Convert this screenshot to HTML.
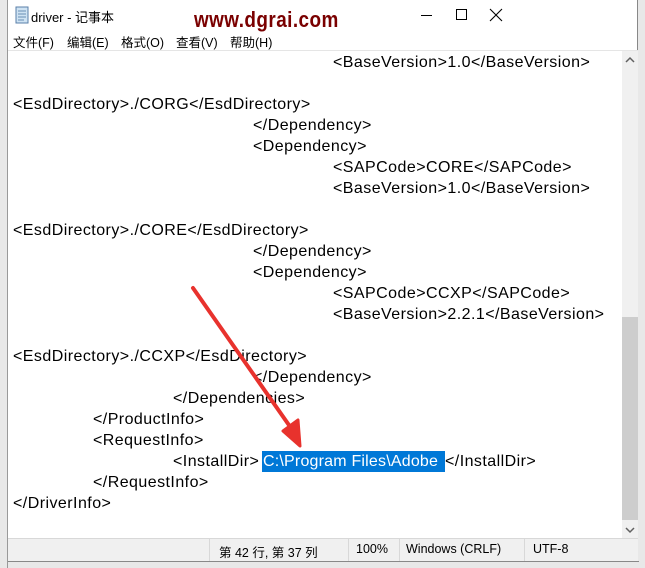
<!DOCTYPE html>
<html><head><meta charset="utf-8"><style>
*{margin:0;padding:0;box-sizing:border-box}
body{width:645px;height:568px;background:#e8e8e8;position:relative;overflow:hidden;font-family:"Liberation Sans","Noto Sans CJK SC",sans-serif}
#win{position:absolute;left:7px;top:0;width:631px;height:568px;background:#fff;border-left:1px solid #999;border-right:1px solid #888}
.t{position:absolute;font-size:16px;color:#000;white-space:pre;line-height:21px;letter-spacing:0.45px}
.m{position:absolute;top:32px;font-size:12.5px;color:#000}
</style></head><body>
<div id="win">
  <svg style="position:absolute;left:6px;top:6px" width="16" height="18"><rect x="2" y="1" width="12" height="16" fill="#cfe3f3" stroke="#5a7fa8"/><path d="M4 5h8M4 8h8M4 11h8M4 14h6" stroke="#6a8fb5"/></svg>
  <div style="position:absolute;left:23px;top:7px;font-size:13px">driver - 记事本</div>
  <div style="position:absolute;left:186px;top:7px;font-size:22px;font-weight:bold;color:#7a0000;transform:scaleX(0.86);transform-origin:0 0;letter-spacing:0.5px">www.dgrai.com</div>
  <div style="position:absolute;left:413px;top:15px;width:11px;height:1px;background:#000"></div>
  <div style="position:absolute;left:448px;top:9px;width:11px;height:11px;border:1px solid #000"></div>
  <svg style="position:absolute;left:481px;top:8px" width="14" height="14"><path d="M1 1L13 13M13 1L1 13" stroke="#000" stroke-width="1.1"/></svg>
  <div class="m" style="left:5px">文件(F)</div>
  <div class="m" style="left:59px">编辑(E)</div>
  <div class="m" style="left:113px">格式(O)</div>
  <div class="m" style="left:168px">查看(V)</div>
  <div class="m" style="left:222px">帮助(H)</div>
  <div style="position:absolute;left:0;top:50px;width:630px;height:1px;background:#e5e5e5"></div>
  <div style="position:absolute;left:614px;top:51px;width:16px;height:487px;background:#f0f0f0"></div>
  <div style="position:absolute;left:614px;top:317px;width:16px;height:203px;background:#cdcdcd"></div>
  <svg style="position:absolute;left:617px;top:56px" width="10" height="8"><path d="M1 6L5 2L9 6" stroke="#606060" stroke-width="1.5" fill="none"/></svg>
  <svg style="position:absolute;left:617px;top:526px" width="10" height="8"><path d="M1 2L5 6L9 2" stroke="#606060" stroke-width="1.5" fill="none"/></svg>
  <div style="position:absolute;left:0;top:538px;width:630px;height:1px;background:#d8d8d8"></div>
  <div style="position:absolute;left:0;top:539px;width:630px;height:22px;background:#f0f0f0;font-size:12.5px">
    <div style="position:absolute;left:201px;top:0;height:22px;border-left:1px solid #d8d8d8"></div>
    <div style="position:absolute;left:211px;top:3px">第 42 行, 第 37 列</div>
    <div style="position:absolute;left:340px;top:0;height:22px;border-left:1px solid #d8d8d8"></div>
    <div style="position:absolute;left:348px;top:3px">100%</div>
    <div style="position:absolute;left:391px;top:0;height:22px;border-left:1px solid #d8d8d8"></div>
    <div style="position:absolute;left:398px;top:3px">Windows (CRLF)</div>
    <div style="position:absolute;left:516px;top:0;height:22px;border-left:1px solid #d8d8d8"></div>
    <div style="position:absolute;left:525px;top:3px">UTF-8</div>
  </div>
  <div style="position:absolute;left:0;top:561px;width:631px;height:1px;background:#888"></div>
  <div style="position:absolute;left:0;top:562px;width:631px;height:6px;background:#e8e8e8"></div>
</div>
<div style="position:absolute;left:262px;top:451px;width:183px;height:21px;background:#0078d7"></div>
<div class="t" style="left:333px;top:52px">&lt;BaseVersion&gt;1.0&lt;/BaseVersion&gt;</div>
<div class="t" style="left:13px;top:94px">&lt;EsdDirectory&gt;./CORG&lt;/EsdDirectory&gt;</div>
<div class="t" style="left:253px;top:115px">&lt;/Dependency&gt;</div>
<div class="t" style="left:253px;top:136px">&lt;Dependency&gt;</div>
<div class="t" style="left:333px;top:157px">&lt;SAPCode&gt;CORE&lt;/SAPCode&gt;</div>
<div class="t" style="left:333px;top:178px">&lt;BaseVersion&gt;1.0&lt;/BaseVersion&gt;</div>
<div class="t" style="left:13px;top:220px">&lt;EsdDirectory&gt;./CORE&lt;/EsdDirectory&gt;</div>
<div class="t" style="left:253px;top:241px">&lt;/Dependency&gt;</div>
<div class="t" style="left:253px;top:262px">&lt;Dependency&gt;</div>
<div class="t" style="left:333px;top:283px">&lt;SAPCode&gt;CCXP&lt;/SAPCode&gt;</div>
<div class="t" style="left:333px;top:304px">&lt;BaseVersion&gt;2.2.1&lt;/BaseVersion&gt;</div>
<div class="t" style="left:13px;top:346px">&lt;EsdDirectory&gt;./CCXP&lt;/EsdDirectory&gt;</div>
<div class="t" style="left:253px;top:367px">&lt;/Dependency&gt;</div>
<div class="t" style="left:173px;top:388px">&lt;/Dependencies&gt;</div>
<div class="t" style="left:93px;top:409px">&lt;/ProductInfo&gt;</div>
<div class="t" style="left:93px;top:430px">&lt;RequestInfo&gt;</div>
<div class="t" style="left:173px;top:451px">&lt;InstallDir&gt;</div>
<div class="t" style="left:263px;top:451px;color:#fff;letter-spacing:0.2px">C:\Program Files\Adobe</div>
<div class="t" style="left:445px;top:451px">&lt;/InstallDir&gt;</div>
<div class="t" style="left:93px;top:472px">&lt;/RequestInfo&gt;</div>
<div class="t" style="left:13px;top:493px">&lt;/DriverInfo&gt;</div>
<svg style="position:absolute;left:0;top:0" width="645" height="568"><path d="M193 288L291 428" stroke="#e8322d" stroke-width="4" stroke-linecap="round"/><path d="M300 446L283 431L298 420Z" fill="#e8322d" stroke="#e8322d" stroke-width="3" stroke-linejoin="round"/></svg>
</body></html>
